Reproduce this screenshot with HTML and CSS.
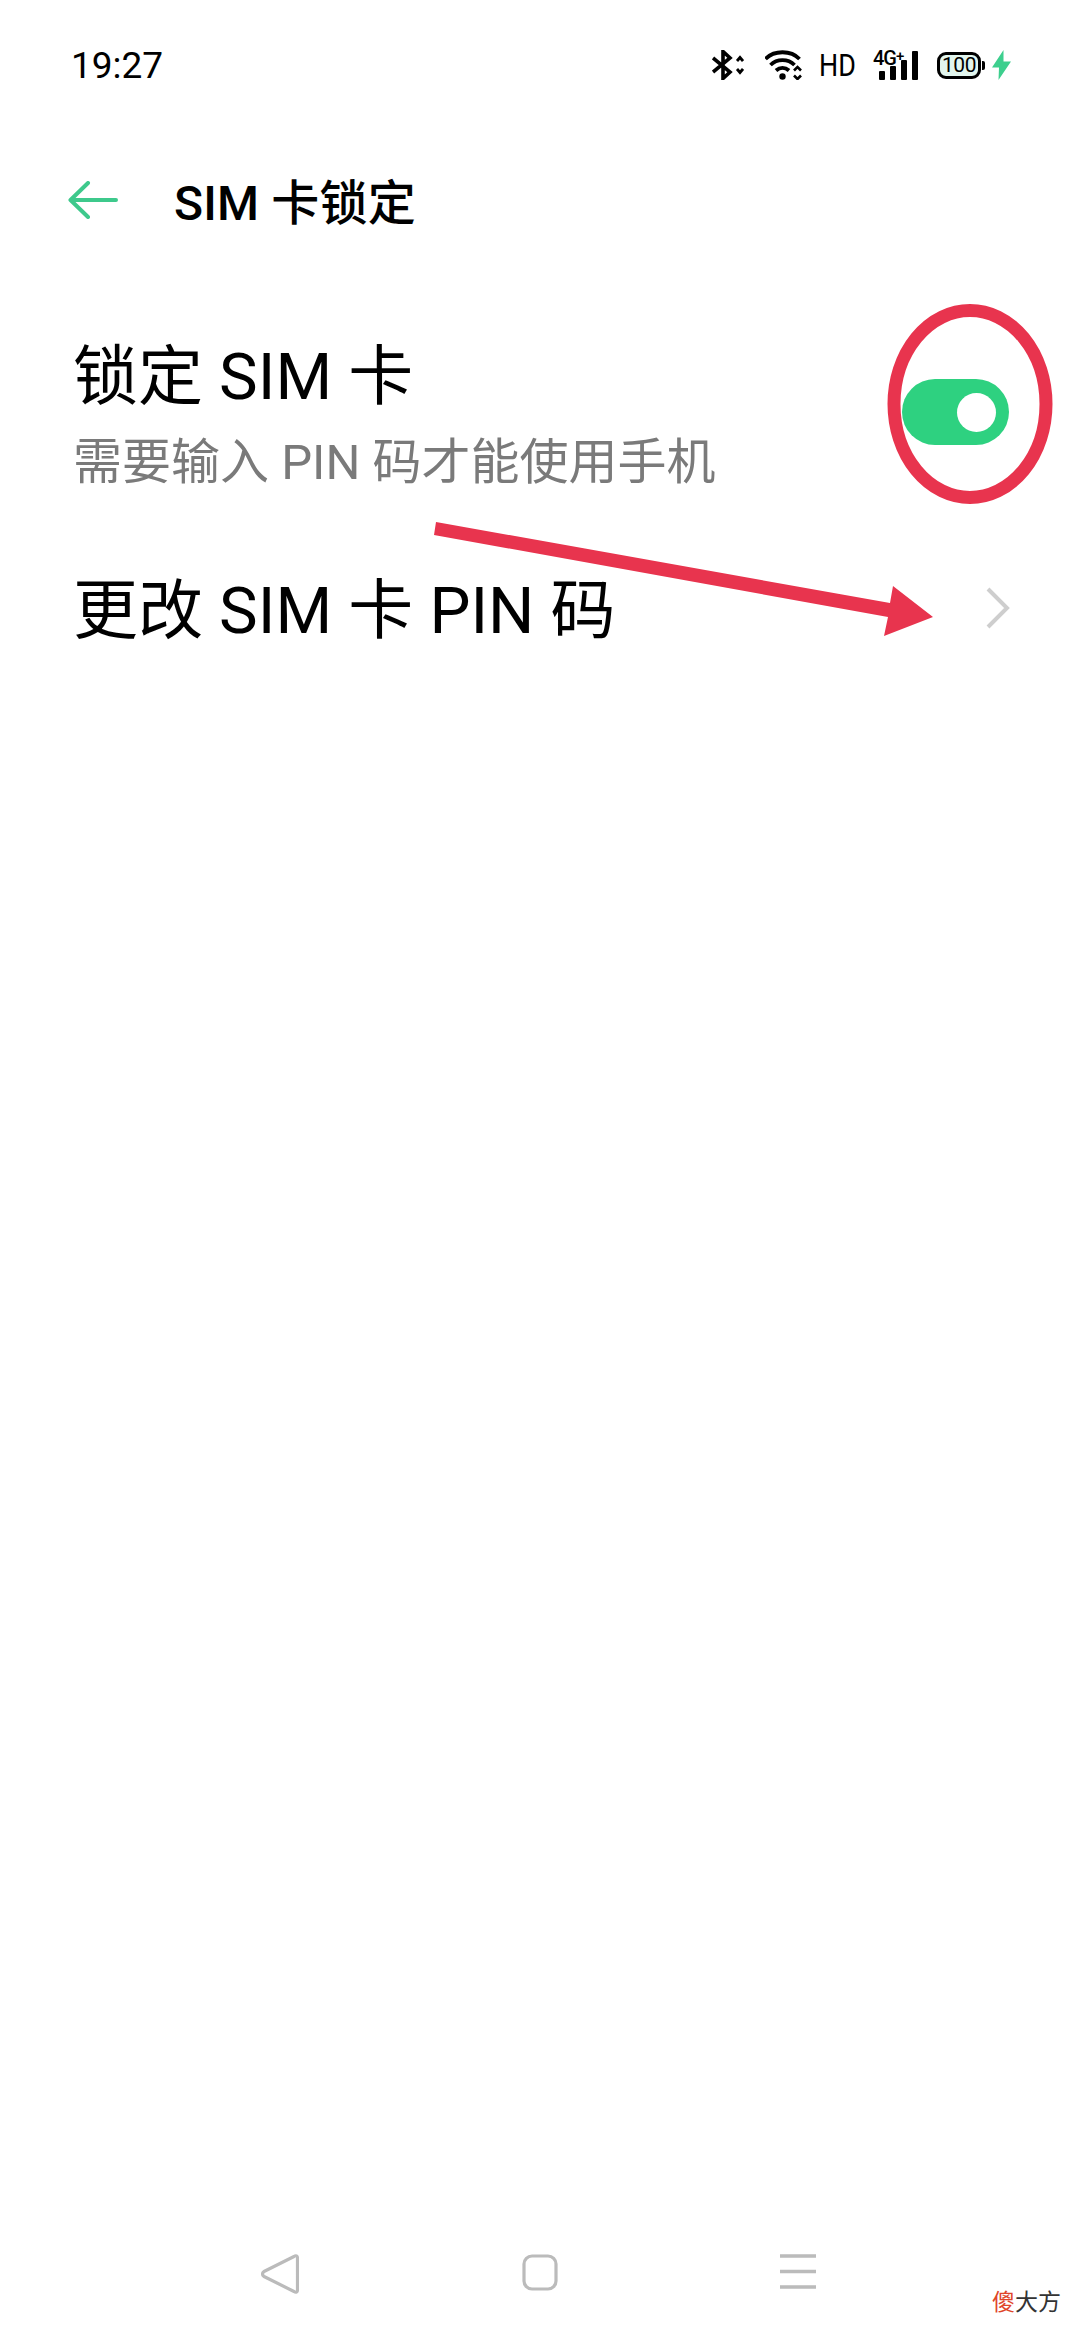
FILE: index.html
```html
<!doctype html>
<html lang="zh-CN">
    <head>
        <meta charset="utf-8">
        <title>SIM 卡锁定</title>
        <link rel="stylesheet" href="styles.css">
    </head>
    <body>
        <div class="page">
            <!-- Status bar -->
            <div class="status-bar">
                <span class="time">19:27</span>
                <div class="status-icons">
                    <svg class="ic-bt" width="32" height="30" viewBox="0 0 32 30">
                        <path d="M1 8 L18 22 L11 28.500 V1.500 L18 8 L1 22" fill="none" stroke="#000" stroke-width="3.600"/>
                        <path d="M25 11 L28 7.500 L31 11 M25 19 L28 22.500 L31 19" fill="none" stroke="#000" stroke-width="2.800"/>
                    </svg>
                    <svg class="ic-wifi" width="38" height="30" viewBox="0 0 38 30">
                        <path d="M0.500 9 C9 0 26 0 34.500 9 M5.500 15 C12 8.500 23 8.500 29.500 15 M11 20.500 C15 17 20 17 24 20.500" fill="none" stroke="#000" stroke-width="3.800"/>
                        <circle cx="17.500" cy="26.500" r="3.200" fill="#000"/>
                        <path d="M29 20.500 L32.500 17 L36 20.500 M29 25.500 L32.500 29 L36 25.500" fill="none" stroke="#000" stroke-width="2.600"/>
                    </svg>
                    <span class="hd">HD</span>
                    <div class="signal">
                        <span class="net">4G<sup>+</sup></span>
                        <div class="bars">
                            <i class="bar bar-1"></i>
                            <i class="bar bar-2"></i>
                            <i class="bar bar-3"></i>
                            <i class="bar bar-4"></i>
                        </div>
                    </div>
                    <div class="battery"><span class="level">100</span></div>
                    <svg class="ic-bolt" width="19" height="30" viewBox="0 0 19 30">
                        <path d="M11.500 0 L0 17.500 H7 L6.500 30 L19 11.500 H11.500 Z" fill="#3dcf8e"/>
                    </svg>
                </div>
            </div>

            <!-- Title bar -->
            <div class="toolbar">
                <svg class="back" width="50" height="38" viewBox="0 0 50 38">
                    <path d="M48 19 H3 M20 2 L2.500 19 L20 36" fill="none" stroke="#3ec98c" stroke-width="4" stroke-linecap="round" stroke-linejoin="round"/>
                </svg>
                <h1 class="title">SIM 卡锁定</h1>
            </div>

            <!-- Settings rows -->
            <div class="row row-lock">
                <div class="row-text">
                    <div class="row-title">锁定 SIM 卡</div>
                    <div class="row-sub">需要输入 PIN 码才能使用手机</div>
                </div>
                <div class="switch"><span class="knob"></span></div>
            </div>
            <div class="row row-change">
                <div class="row-title">更改 SIM 卡 PIN 码</div>
                <svg class="chevron" width="24" height="42" viewBox="0 0 24 42">
                    <path d="M2 2 L21 21 L2 40" fill="none" stroke="#cecece" stroke-width="4"/>
                </svg>
            </div>

            <!-- Navigation bar -->
            <div class="nav-bar">
                <svg width="38" height="40" viewBox="0 0 38 40">
                    <path d="M33 2.500 C35 1 36.500 2 36.500 4 V36 C36.500 38 35 39 33 37.500 L3 22.500 C1 21 1 19 3 17.500 Z" fill="none" stroke="#bbb" stroke-width="3.200" stroke-linejoin="round"/>
                </svg>
                <svg width="36" height="37" viewBox="0 0 36 37">
                    <rect x="2" y="2" width="32" height="33" rx="8" fill="none" stroke="#bbb" stroke-width="3.200"/>
                </svg>
                <svg width="36" height="35" viewBox="0 0 36 35">
                    <path d="M0 2 H36 M0 17.500 H36 M0 33 H36" fill="none" stroke="#bbb" stroke-width="3.600"/>
                </svg>
            </div>

            <!-- Annotations drawn on top of the screenshot -->
            <svg class="markup" width="1080" height="2340" viewBox="0 0 1080 2340">
                <ellipse cx="970" cy="404" rx="76" ry="93.500" fill="none" stroke="#e8344e" stroke-width="13"/>
                <path d="M436 522 L890 603 L893 586 L933 617 L884 636 L888 617 L434 535 Z" fill="#e8344e"/>
            </svg>
            <div class="watermark"><span class="wm-red">傻</span>大方</div>
        </div>
    </body>
</html>
```

FILE: styles.css
```css
body {
    margin: 0;
    background: #fff;
    font-family: Roboto, "Noto Sans CJK SC", sans-serif;
    color: #000;
}
.page {
    position: relative;
    width: 1080px;
    height: 2340px;
    overflow: hidden;
    display: flex;
    flex-direction: column;
}

/* status bar */
.status-bar {
    height: 130px;
    padding: 0 69px 0 71px;
    display: flex;
    align-items: center;
    justify-content: space-between;
}
.time { font-size: 37px; }
.status-icons {
    display: flex;
    align-items: center;
}
.ic-wifi { margin-left: 21px; }
.hd {
    width: 36px;
    margin-left: 16px;
    font-size: 32px;
    line-height: 30px;
    transform: scaleX(0.84);
    transform-origin: left center;
    white-space: nowrap;
}
.signal {
    position: relative;
    width: 46px;
    height: 30px;
    margin-left: 18px;
}
.net {
    position: absolute;
    top: -2px;
    left: 0;
    font-size: 20px;
    font-weight: 500;
    line-height: 20px;
    letter-spacing: -1px;
}
.net sup {
    font-size: 15px;
    line-height: 0;
    vertical-align: 4px;
}
.bars {
    position: absolute;
    left: 6px;
    bottom: 0;
    display: flex;
    align-items: flex-end;
    gap: 5px;
}
.bar {
    width: 6px;
    background: #000;
    border-radius: 1px;
}
.bar-1 { height: 9px; }
.bar-2 { height: 14px; }
.bar-3 { height: 20px; }
.bar-4 { height: 29px; }
.battery {
    position: relative;
    width: 38px;
    height: 21px;
    margin-left: 18px;
    margin-right: 4px;
    border: 3px solid #000;
    border-radius: 9px;
    background: #e2f6ee;
    display: flex;
    align-items: center;
    justify-content: center;
}
.battery::after {
    content: "";
    position: absolute;
    right: -7px;
    top: 6px;
    width: 3px;
    height: 9px;
    background: #000;
    border-radius: 0 2px 2px 0;
}
.level {
    font-size: 21px;
    line-height: 21px;
    letter-spacing: -0.5px;
}
.ic-bolt { margin-left: 7px; }

/* title bar */
.toolbar {
    height: 140px;
    padding-left: 68px;
    display: flex;
    align-items: center;
}
.title {
    margin: 0 0 3px 56px;
    font-size: 48px;
    font-weight: 500;
    letter-spacing: 0.2px;
}

/* rows */
.row {
    padding: 0 69px 0 73px;
    display: flex;
    align-items: center;
    justify-content: space-between;
}
.row-lock {
    height: 280px;
    box-sizing: border-box;
    padding-top: 19px;
}
.row-change {
    height: 120px;
    box-sizing: border-box;
    padding-top: 2px;
}
.row-title {
    font-size: 65px;
    line-height: 84px;
}
.row-sub {
    margin-top: 3px;
    font-size: 49px;
    line-height: 82px;
    color: #7a7a7a;
}
.switch {
    position: relative;
    width: 107px;
    height: 66px;
    margin: 0 2px 15px 0;
    border-radius: 33px;
    background: #2ed180;
}
.knob {
    position: absolute;
    top: 13.5px;
    right: 13.5px;
    width: 39px;
    height: 39px;
    border-radius: 50%;
    background: #fff;
}
.chevron { margin: 0 1px 6px 0; }

/* navigation bar */
.nav-bar {
    margin-top: auto;
    height: 132px;
    padding: 46px 264px 0 261px;
    box-sizing: border-box;
    display: flex;
    align-items: flex-start;
    justify-content: space-between;
}

/* annotations */
.markup {
    position: absolute;
    top: 0;
    left: 0;
    pointer-events: none;
}
.watermark {
    position: absolute;
    right: 19px;
    bottom: 24px;
    font-size: 23px;
    line-height: 27px;
    color: #333;
}
.wm-red { color: #e0452a; }
```
